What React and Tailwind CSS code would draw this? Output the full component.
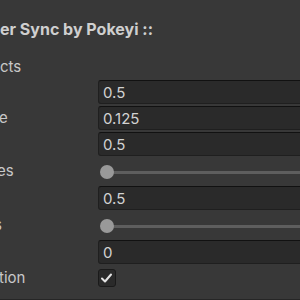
import React from "react";

function Field({ value }) {
  return (
    <div className="h-[24px] -mr-[12px] bg-[#2a2a2a] border border-[#1f1f1f] border-t-[#111111] rounded-[3px] pl-[4px] flex items-center text-[15px] text-[#d2d2d2] leading-none">
      {value}
    </div>
  );
}

function Slider() {
  return (
    <div className="h-[26px] pt-[2px] flex items-center -mr-[12px]">
      <div className="w-[14px] h-[14px] rounded-full bg-[#999999] ml-[2px] relative z-10" />
      <div className="flex-1 h-[3px] bg-[#5e5e5e] -ml-[7px]" />
    </div>
  );
}

function Label({ children, cls }) {
  return (
    <div className={"flex items-center text-[15px] text-[#c8c8c8] whitespace-nowrap overflow-visible " + (cls || "")}>
      {children}
    </div>
  );
}

export default function App() {
  return (
    <div className="w-[300px] h-[300px] bg-[#383838] overflow-hidden font-['Inter',sans-serif] text-[#c8c8c8]">
      <div className="pt-[19px] leading-[20px] text-[16px] font-bold whitespace-nowrap text-[#cfcfcf]">
        er Sync by Pokeyi ::
      </div>
      <div className="mt-[18px] leading-[20px] text-[15px] whitespace-nowrap">cts</div>
      <div className="mt-[3px] grid grid-cols-[98px_1fr] gap-y-[2px]">
        <Label />
        <Field value="0.5" />
        <Label cls="-ml-[1px]">e</Label>
        <Field value="0.125" />
        <Label />
        <Field value="0.5" />
        <Label cls="-ml-[3px]">es</Label>
        <Slider />
        <Label />
        <Field value="0.5" />
        <Label cls="-ml-[6px]">s</Label>
        <Slider />
        <Label />
        <Field value="0" />
        <Label cls="-ml-[1px]">tion</Label>
        <div className="h-[24px] flex items-center">
          <div className="w-[18px] h-[18px] rounded-[3px] bg-[#2a2a2a] border border-[#1a1a1a] flex items-center justify-center">
            <svg width="16" height="16" viewBox="0 0 16 16">
              <path d="M3 8.5 L6 11.5 L12 4.5" fill="none" stroke="#e4e4e4" strokeWidth="2" strokeLinecap="round" strokeLinejoin="round" />
            </svg>
          </div>
        </div>
      </div>
      <div className="mt-[9px] h-[1px] bg-[#262626]" />
    </div>
  );
}
